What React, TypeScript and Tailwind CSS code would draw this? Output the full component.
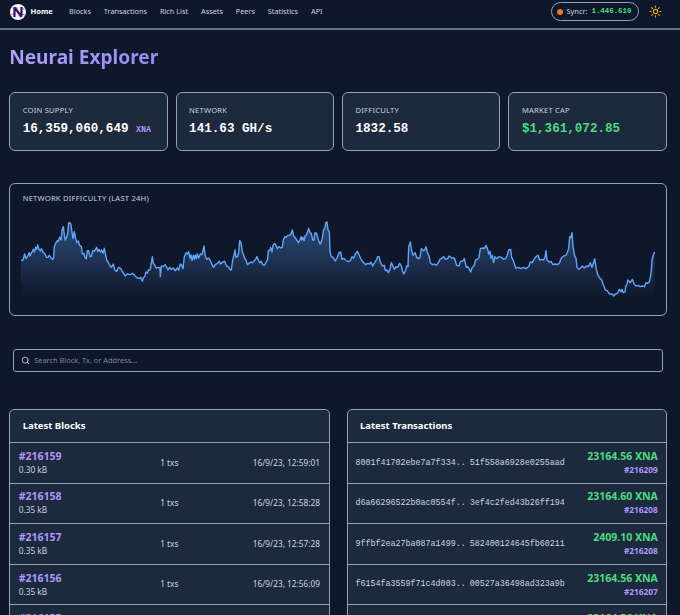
import React from "react";
import { Search, Sun } from "lucide-react";

const navLinks = ["Blocks", "Transactions", "Rich List", "Assets", "Peers", "Statistics", "API"];

const blocks = [
  { height: "#216159", size: "0.30 kB", txs: "1 txs", date: "16/9/23, 12:59:01" },
  { height: "#216158", size: "0.35 kB", txs: "1 txs", date: "16/9/23, 12:58:28" },
  { height: "#216157", size: "0.35 kB", txs: "1 txs", date: "16/9/23, 12:57:28" },
  { height: "#216156", size: "0.35 kB", txs: "1 txs", date: "16/9/23, 12:56:09" },
  { height: "#216155", size: "", txs: "", date: "" },
];

const transactions = [
  { start: "8001f41702ebe7a7f334..", end: "51f558a6928e0255aad", amount: "23164.56 XNA", block: "#216209" },
  { start: "d6a66296522b0ac0554f..", end: "3ef4c2fed43b26ff194", amount: "23164.60 XNA", block: "#216208" },
  { start: "9ffbf2ea27ba087a1499..", end: "582400124645fb60211", amount: "2409.10 XNA", block: "#216208" },
  { start: "f6154fa3559f71c4d003..", end: "00527a36498ad323a9b", amount: "23164.56 XNA", block: "#216207" },
  { start: "", end: "", amount: "23164.56 XNA", block: "" },
];

// Difficulty samples for the last 24h, eight hours per chunk
const early =
  "63,242 69,240 74,222 78,236 83,228 88,218 90,228 96,216 100,208 103,216 107,202 110,208 113,195 117,208 121,213 124,206 130,218 135,222 140,232 144,232 148,226 153,234 158,238 161,234 163,200 167,190 172,182 175,184 179,172 183,180 186,150 190,140 193,165 196,180 200,172 203,160 206,128 212,130 215,150 219,176 223,155 227,175 231,188 235,183 239,196 244,200 247,222 252,220 255,232 259,236 262,212 266,212 270,230 274,230 278,212 283,214 288,206 290,202 293,214 297,208 301,216 305,210 309,220 313,205 316,220 320,240 324,246 328,254 334,262 340,252 344,270 350,274 356,262 362,266 368,276 376,288 382,282 390,284 398,280 404,286 410,293 416,296 422,292 427,304 430,293 434,290 438,276 442,280 445,270 450,270 454,250 457,230 460,250 464,254 468,264 474,262 480,264 481,290 484,258 490,260 495,254 499,260 504,270 509,262 514,268 520,264 526,272 532,264 536,270 541,252 545,256 549,266 553,230 558,218 562,222 566,215 570,234 573,225 576,242 580,226 583,238 586,225 589,236 592,222 596,234 601,222 606,224 612,198 615,225 620,238 626,234 632,244 636,254 641,262 646,254 652,250 658,244 662,252 668,246 674,244";
const middle =
  "2,252 5,258 10,260 15,268 19,270 23,240 27,225 30,210 33,232 37,230 41,220 44,182 48,188 52,215 56,225 59,235 63,240 67,254 72,250 77,246 82,248 88,242 92,238 96,230 100,240 104,248 109,244 113,254 119,255 124,245 128,238 130,212 134,212 137,202 141,216 144,196 149,190 153,196 157,206 162,200 167,204 172,202 175,180 179,170 183,172 188,166 193,166 198,162 202,150 206,168 210,172 214,178 220,188 225,180 228,170 231,180 234,172 237,182 240,168 244,165 248,155 251,145 255,158 259,160 263,180 267,180 270,158 275,160 279,176 285,192 289,186 292,175 295,152 299,145 303,128 306,126 309,150 313,155 315,216 319,230 324,232 331,243 336,234 342,218 347,216 351,238 357,235 363,242 370,245 376,242 381,230 386,235 391,222 397,214 402,224 408,238 414,246 422,254 428,250 434,252 438,246 443,258 449,248 454,240 458,230 462,230 466,246 472,258 478,256 481,272 486,270 490,278 495,268 499,248 504,258 508,268 513,260 518,262 524,250 529,258 533,275 537,282 542,270 545,258 549,260 551,200 556,186 560,212 564,226 570,218 575,232 580,236 585,232 589,206 595,212 599,210 603,200 607,216 612,228 616,248 621,254 628,252 634,256 640,248 645,238 651,234 656,230 661,238 667,236 673,228";
const late =
  "5,234 13,234 20,256 27,258 32,244 37,244 43,236 49,262 54,260 62,276 67,262 72,258 77,240 83,238 87,232 91,206 98,204 103,206 108,196 113,208 116,222 120,214 123,235 127,226 131,248 135,230 140,236 147,230 154,232 160,238 167,236 171,228 176,210 182,208 185,232 191,244 197,264 204,262 212,266 220,262 227,266 236,260 241,246 247,248 252,238 258,230 264,226 269,240 275,238 281,240 285,232 288,212 291,240 297,246 303,244 309,254 315,252 321,254 328,250 334,234 341,228 348,226 353,215 356,205 359,170 363,172 366,158 369,200 374,228 378,235 381,262 386,268 392,264 397,258 403,264 409,258 415,260 421,248 426,262 430,250 434,236 438,262 443,284 449,294 455,300 460,314 466,330 472,332 478,342 486,342 491,348 496,342 503,340 508,328 513,336 516,328 520,338 525,336 527,320 531,312 534,300 541,308 547,298 552,312 558,318 564,316 570,320 577,318 583,320 588,308 593,310 598,306 601,292 604,270 606,240 610,225 614,216";

const shift = (chunk: string, dx: number) =>
  chunk.split(" ").map((pair) => {
    const [x, y] = pair.split(",").map(Number);
    return `${x + dx},${y}`;
  });

const line = [...shift(early, 0), ...shift(middle, 675), ...shift(late, 1350)].join(" L");

const Logo = () => (
  <svg viewBox="0 0 32 32" className="h-4 w-4">
    <circle cx="16" cy="16" r="16" fill="#f8f5fb" />
    <path d="M9 26V7L23 25V6" fill="none" stroke="#35125f" strokeWidth="4.4" strokeLinejoin="bevel" />
    <path d="M5 8h4M12 6l4 5M17 22l4 5M3 22l4-3M25 10h4M25 20l4 2" stroke="#8d3fa8" strokeWidth="1.6" />
  </svg>
);

const Header = () => (
  <header className="h-[30px] border-b-2 border-[#64748b]">
    <div className="flex h-[23px] items-center pl-[10px] pr-[18px]">
      <Logo />
      <span className="ml-[4.5px] w-[22px] text-[7.5px] font-bold text-white">Home</span>
      <nav className="ml-[16.5px] flex gap-[12.9px] text-[7.3px] text-slate-300">
        {navLinks.map((link) => (
          <a key={link}>{link}</a>
        ))}
      </nav>
      <div className="ml-auto flex h-[19px] w-[88px] items-center rounded-full border border-slate-400 pl-[5px]">
        <span className="h-[6px] w-[6px] rounded-full bg-[#f97316]" />
        <span className="ml-[4px] text-[7.4px] text-slate-300">Syncr:</span>
        <span className="ml-[4px] font-['Liberation_Mono'] text-[7.4px] font-bold text-[#4ade80]">1.446.610</span>
      </div>
      <Sun className="ml-[10.5px] h-[13px] w-[13px] text-[#eab308]" strokeWidth={2} />
    </div>
  </header>
);

type StatProps = { label: string; value: string; unit?: string; green?: boolean };

const StatCard = ({ label, value, unit, green }: StatProps) => (
  <div className="h-[58.5px] rounded-[6px] border border-slate-400 bg-slate-800 pl-[12.5px] pt-[12px]">
    <div className="text-[7.6px] leading-[11px] tracking-[0.22px] text-slate-300">{label}</div>
    <div className="mt-[4.5px] whitespace-nowrap font-['Liberation_Mono'] text-[12.6px] font-bold leading-[17px]">
      <span className={green ? "text-[#4ade80]" : "text-white"}>{value}</span>
      {unit && <span className="ml-[7.5px] text-[8.3px] text-[#ae97fb]">{unit}</span>}
    </div>
  </div>
);

const DifficultyChart = () => (
  <section className="mt-[32.5px] h-[133px] rounded-[6px] border border-slate-400 px-[10.5px] pt-[9px]">
    <h2 className="pl-[2px] text-[7.6px] leading-[11px] tracking-[0.22px] text-slate-300">
      NETWORK DIFFICULTY (LAST 24H)
    </h2>
    <svg viewBox="60 75 1908 285" className="-ml-[0.5px] mt-[1px] h-[95px] w-[636px]">
      <defs>
        <linearGradient id="fill" gradientUnits="userSpaceOnUse" x1="0" y1="126" x2="0" y2="354">
          <stop offset="0" stopColor="#60a5fa" stopOpacity="0.38" />
          <stop offset="1" stopColor="#60a5fa" stopOpacity="0" />
        </linearGradient>
      </defs>
      <path d={`M63,354 L${line} L1964,354 Z`} fill="url(#fill)" />
      <path d={`M${line}`} fill="none" stroke="#60a5fa" strokeWidth="4.2" strokeLinejoin="round" />
    </svg>
  </section>
);

const Panel = ({ title, children }: { title: string; children: React.ReactNode }) => (
  <section className="rounded-t-[5px] border border-slate-400 bg-slate-800">
    <h2 className="flex h-[32px] items-center pl-[12.5px] text-[9.5px] font-bold text-white">{title}</h2>
    {children}
  </section>
);

const App = () => {
  return (
    <div className="h-[615px] w-[680px] overflow-hidden bg-[#0f172a] font-['Noto_Sans',sans-serif]">
      <Header />
      <main className="pl-[9.2px] pr-[13.2px]">
        <h1 className="mt-[13px] w-fit bg-gradient-to-r from-[#b0a0fc] to-[#938bf5] bg-clip-text text-[19.1px] font-bold leading-[28px] text-transparent">
          Neurai Explorer
        </h1>
        <div className="mt-[21px] grid grid-cols-4 gap-[8px]">
          <StatCard label="COIN SUPPLY" value="16,359,060,649" unit="XNA" />
          <StatCard label="NETWORK" value="141.63 GH/s" />
          <StatCard label="DIFFICULTY" value="1832.58" />
          <StatCard label="MARKET CAP" value="$1,361,072.85" green />
        </div>
        <DifficultyChart />
        <div className="mx-[4px] mt-[33px] flex h-[23px] items-center rounded-[3px] border border-slate-400 pl-[7px]">
          <Search className="h-[9px] w-[9px] text-slate-300" strokeWidth={2.2} />
          <span className="ml-[4px] text-[7.4px] text-[#7c889c]">Search Block, Tx, or Address...</span>
        </div>
        <div className="mt-[37px] grid grid-cols-2 gap-[17px]">
          <Panel title="Latest Blocks">
            {blocks.map((b) => (
              <div
                key={b.height}
                className="grid h-[40.6px] grid-cols-3 items-center border-t border-slate-400 px-[8.5px] text-[8.3px] text-slate-300"
              >
                <div>
                  <div className="text-[10.5px] font-bold leading-[15px] text-[#ae97fb]">{b.height}</div>
                  <div className="h-[13px] leading-[12px]">{b.size}</div>
                </div>
                <div className="text-center">{b.txs}</div>
                <div className="whitespace-nowrap text-right">{b.date}</div>
              </div>
            ))}
          </Panel>
          <Panel title="Latest Transactions">
            {transactions.map((t, i) => (
              <div
                key={i}
                className="flex h-[40.6px] items-center border-t border-slate-400 px-[8px] text-slate-300"
              >
                <div className="flex gap-[4px] whitespace-nowrap font-['Liberation_Mono'] text-[8.35px]">
                  <span>{t.start}</span>
                  <span>{t.end}</span>
                </div>
                <div className="ml-auto whitespace-nowrap text-right font-bold">
                  <div className="text-[10.5px] leading-[15px] text-[#4ade80]">{t.amount}</div>
                  <div className="h-[13px] text-[8.3px] leading-[12px] text-[#ae97fb]">{t.block}</div>
                </div>
              </div>
            ))}
          </Panel>
        </div>
      </main>
    </div>
  );
};

export default App;
